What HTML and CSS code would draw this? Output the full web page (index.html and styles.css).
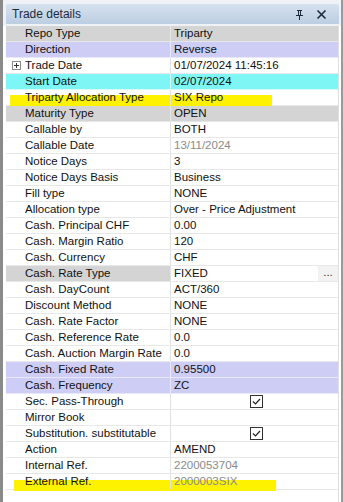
FILE: index.html
```html
<!DOCTYPE html>
<html>
<head>
<meta charset="utf-8">
<link rel="stylesheet" href="styles.css">
</head>
<body>
<div class="frame">
  <div class="titlebar">
    <span class="title">Trade details</span>
    <span class="tools">
      <svg class="pin" width="9" height="11" viewBox="0 0 9 11"><path d="M2 1h5v1H6v4h2v1H5v4H4V7H1V6h2V2H2z M4 2v4h1V2z" fill="#1b2a3d" fill-rule="evenodd"/></svg>
      <svg class="close" width="11" height="11" viewBox="0 0 11 11"><path d="M1.5 1.5l8 8M9.5 1.5l-8 8" stroke="#1b2a3d" stroke-width="1.6"/></svg>
    </span>
  </div>
  <div class="grid">
    <div class="row gray"><div class="lab">Repo Type</div><div class="val">Triparty</div></div>
    <div class="row lav"><div class="lab">Direction</div><div class="val">Reverse</div></div>
    <div class="row"><div class="lab"><span class="exp"></span>Trade Date</div><div class="val">01/07/2024 11:45:16</div></div>
    <div class="row cyan"><div class="lab">Start Date</div><div class="val">02/07/2024</div></div>
    <div class="row"><span class="hl hl1"></span><div class="lab">Triparty Allocation Type</div><div class="val">SIX Repo</div></div>
    <div class="row gray"><div class="lab">Maturity Type</div><div class="val">OPEN</div></div>
    <div class="row"><div class="lab">Callable by</div><div class="val">BOTH</div></div>
    <div class="row"><div class="lab">Callable Date</div><div class="val dim">13/11/2024</div></div>
    <div class="row"><div class="lab">Notice Days</div><div class="val">3</div></div>
    <div class="row"><div class="lab">Notice Days Basis</div><div class="val">Business</div></div>
    <div class="row"><div class="lab">Fill type</div><div class="val">NONE</div></div>
    <div class="row"><div class="lab">Allocation type</div><div class="val">Over - Price Adjustment</div></div>
    <div class="row"><div class="lab">Cash. Principal CHF</div><div class="val">0.00</div></div>
    <div class="row"><div class="lab">Cash. Margin Ratio</div><div class="val">120</div></div>
    <div class="row"><div class="lab">Cash. Currency</div><div class="val">CHF</div></div>
    <div class="row"><div class="lab graylab">Cash. Rate Type</div><div class="val edit"><span>FIXED</span><span class="dots">...</span></div></div>
    <div class="row"><div class="lab">Cash. DayCount</div><div class="val">ACT/360</div></div>
    <div class="row"><div class="lab">Discount Method</div><div class="val">NONE</div></div>
    <div class="row"><div class="lab">Cash. Rate Factor</div><div class="val">NONE</div></div>
    <div class="row"><div class="lab">Cash. Reference Rate</div><div class="val">0.0</div></div>
    <div class="row"><div class="lab">Cash. Auction Margin Rate</div><div class="val">0.0</div></div>
    <div class="row lav"><div class="lab">Cash. Fixed Rate</div><div class="val">0.95500</div></div>
    <div class="row lav"><div class="lab">Cash. Frequency</div><div class="val">ZC</div></div>
    <div class="row"><div class="lab">Sec. Pass-Through</div><div class="val center"><svg class="chk" width="13" height="13" viewBox="0 0 13 13"><rect x="0.5" y="0.5" width="12" height="12" fill="#fff" stroke="#333"/><path d="M3 6.5l2.5 2.5 4.5-5" fill="none" stroke="#222" stroke-width="1.2"/></svg></div></div>
    <div class="row"><div class="lab">Mirror Book</div><div class="val"></div></div>
    <div class="row"><div class="lab">Substitution. substitutable</div><div class="val center"><svg class="chk" width="13" height="13" viewBox="0 0 13 13"><rect x="0.5" y="0.5" width="12" height="12" fill="#fff" stroke="#333"/><path d="M3 6.5l2.5 2.5 4.5-5" fill="none" stroke="#222" stroke-width="1.2"/></svg></div></div>
    <div class="row"><div class="lab">Action</div><div class="val">AMEND</div></div>
    <div class="row"><div class="lab">Internal Ref.</div><div class="val dim">2200053704</div></div>
    <div class="row"><span class="hl hl2"></span><div class="lab">External Ref.</div><div class="val dim">2000003SIX</div></div>
  </div>
</div>
</body>
</html>
```

FILE: styles.css
```css
html, body {
  margin: 0;
  padding: 0;
  background: #ffffff;
}
body {
  font-family: "Liberation Sans", Arial, sans-serif;
  font-size: 11.5px;
  color: #111;
}
.frame {
  width: 343px;
  height: 502px;
  box-sizing: border-box;
  border-left: 3px solid #8a8a8a;
  border-right: 2px solid #9a9a9a;
  padding: 4px 2px 0 3px;
  background: #ffffff;
  background-image: linear-gradient(#eef1f5, #eef1f5);
  background-size: 100% 26px;
  background-repeat: no-repeat;
  display: flex;
  flex-direction: column;
}
.titlebar {
  height: 20px;
  margin-bottom: 2px;
  background: linear-gradient(#d6e1ee, #bccee2);
  border-radius: 2px 2px 0 0;
  display: flex;
  align-items: center;
  justify-content: space-between;
  padding: 0 12px 0 6px;
}
.title {
  font-size: 12px;
  color: #1c2b3c;
}
.tools {
  display: flex;
  align-items: center;
  gap: 12px;
}
.pin { display: block; }
.close { display: block; }
.grid {
  display: flex;
  flex-direction: column;
  border-right: 1px solid #e0e0e0;
  background: #fff;
  flex: 1;
}
.row {
  position: relative;
  display: grid;
  grid-template-columns: 165px 1fr;
  height: 16px;
  box-sizing: border-box;
  border-bottom: 1px solid #e8e8e8;
}
.row > .lab, .row > .val {
  line-height: 15px;
  white-space: nowrap;
  position: relative;
}
.lab {
  padding-left: 19px;
  border-right: 1px solid #e2e2e2;
  display: flex;
  align-items: center;
}
.val {
  padding-left: 3px;
  display: flex;
  align-items: center;
}
.gray { background: #d4d4d4; border-bottom-color: #e6e6e6; }
.gray .lab { border-right-color: #e6e6e6; }
.lav { background: #cdcdf6; border-bottom-color: #e8e8f8; }
.lav .lab { border-right-color: #e8e8f8; }
.cyan { background: #7ff6f6; border-bottom-color: #d8fafa; }
.cyan .lab { border-right-color: #d8fafa; }
.graylab { background: #d4d4d4; }
.dim { color: #8a8a8a; }
.edit {
  justify-content: space-between;
  padding-right: 0;
}
.dots {
  width: 20px;
  height: 15px;
  background: #f2f2f2;
  color: #333;
  text-align: center;
  line-height: 12px;
}
.center { justify-content: flex-start; padding-left: 79px; }
.chk { display: block; }
.exp {
  position: absolute;
  left: 6px;
  top: 3px;
  width: 7px;
  height: 7px;
  border: 1px solid #8c8c8c;
  background: #fff;
}
.exp::before {
  content: "";
  position: absolute;
  left: 1px;
  top: 3px;
  width: 5px;
  height: 1px;
  background: #333;
}
.exp::after {
  content: "";
  position: absolute;
  left: 3px;
  top: 1px;
  width: 1px;
  height: 5px;
  background: #333;
}
.hl {
  position: absolute;
  background: #fff200;
  z-index: 0;
}
.hl1 { left: 4px; top: 5px; width: 262px; height: 12px; }
.hl2 { left: 8px; top: 6px; width: 262px; height: 11px; }
.row .lab, .row .val { z-index: 1; }
```
